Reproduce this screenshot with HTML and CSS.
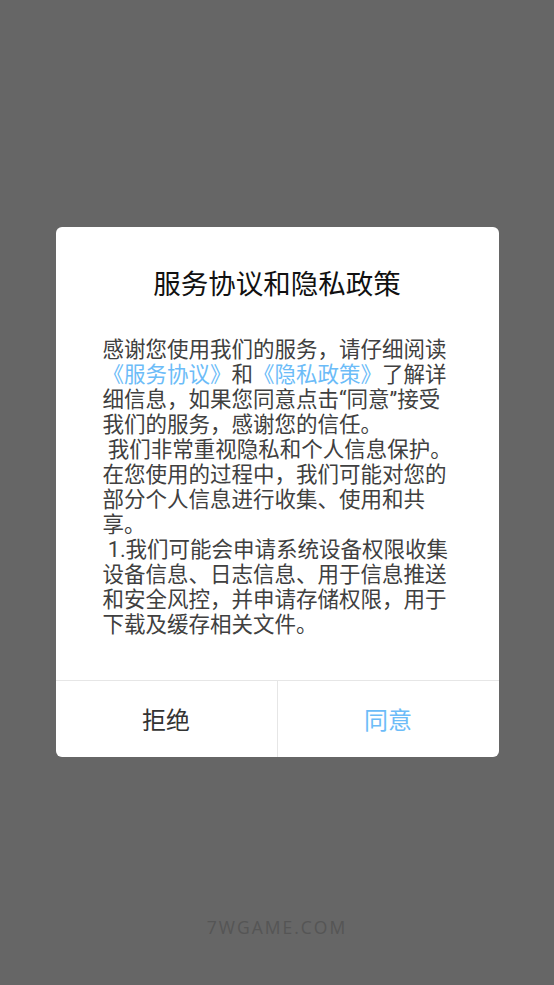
FILE: index.html
```html
<!DOCTYPE html>
<html lang="zh-CN">
<head>
<meta charset="utf-8">
<title>服务协议和隐私政策</title>
<link rel="stylesheet" href="styles.css">
</head>
<body>
<div class="screen">
  <div class="dialog">
    <h1 class="title">服务协议和隐私政策</h1>
    <div class="content">感谢您使用我们的服务，请仔细阅读<span class="link">《服务协议》</span>和<span class="link">《隐私政策》</span>了解详细信息，如果您同意点击“同意”接受我们的服务，感谢您的信任。<br>&nbsp;我们非常重视隐私和个人信息保护。在您使用的过程中，我们可能对您的部分个人信息进行收集、使用和共享。<br>&nbsp;1.我们可能会申请系统设备权限收集设备信息、日志信息、用于信息推送和安全风控，并申请存储权限，用于下载及缓存相关文件。</div>
    <div class="actions">
      <div class="btn btn-reject">拒绝</div>
      <div class="btn btn-agree">同意</div>
    </div>
  </div>
  <div class="footer">7WGAME.COM</div>
</div>
</body>
</html>
```

FILE: styles.css
```css
html, body {
  margin: 0;
  padding: 0;
  height: 100%;
}
body {
  background: #666666;
  font-family: Roboto, "Noto Sans CJK SC", sans-serif;
}
.screen {
  height: 985px;
  display: flex;
  flex-direction: column;
  align-items: center;
}
.dialog {
  margin-top: 227px;
  width: 443px;
  background: #ffffff;
  border-radius: 6px;
  overflow: hidden;
}
.title {
  margin: 0;
  padding-top: 40px;
  font-size: 27.5px;
  line-height: 36px;
  font-weight: normal;
  color: #111111;
  text-align: center;
}
.content {
  margin: 34px 38px 0 47px;
  font-size: 21.5px;
  line-height: 25px;
  color: #404040;
  padding-bottom: 43px;
}
.link {
  color: #6cbcf8;
}
.actions {
  display: flex;
  border-top: 1px solid #e6e6e6;
  height: 76px;
}
.btn {
  flex: 1;
  display: flex;
  align-items: center;
  justify-content: center;
  font-size: 24px;
  padding-bottom: 2px;
}
.btn-reject {
  color: #333333;
  border-right: 1px solid #e6e6e6;
}
.btn-agree {
  color: #6cbcf8;
}
.footer {
  margin-top: auto;
  margin-bottom: 46px;
  font-family: "Open Sans", sans-serif;
  font-size: 17.5px;
  letter-spacing: 2px;
  color: #555555;
}
```
